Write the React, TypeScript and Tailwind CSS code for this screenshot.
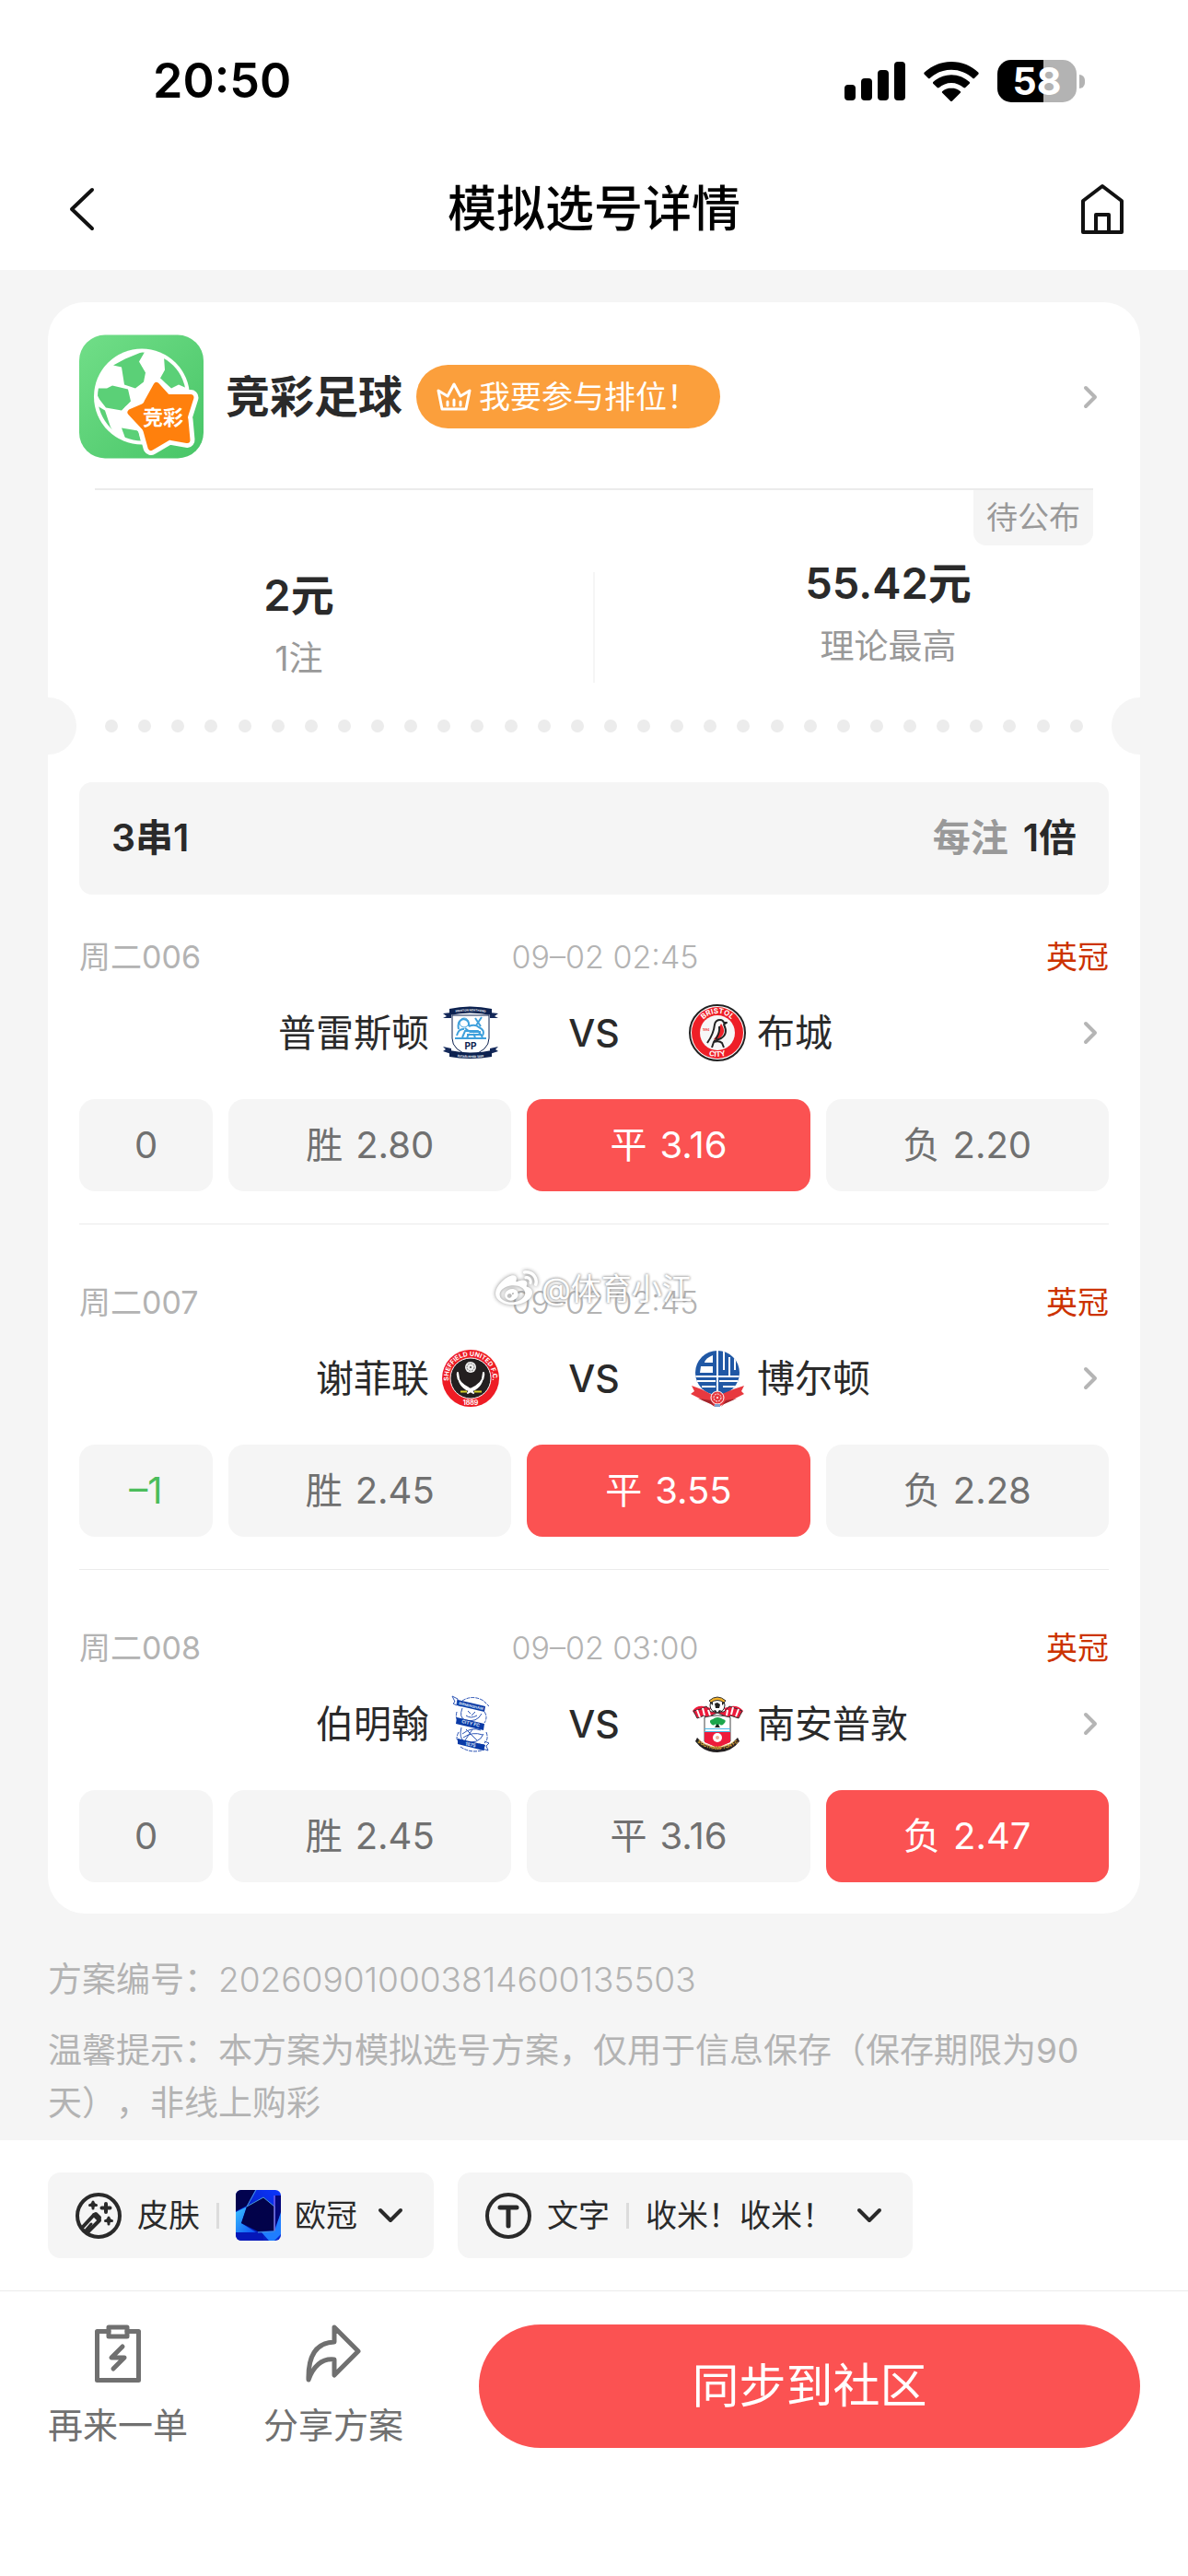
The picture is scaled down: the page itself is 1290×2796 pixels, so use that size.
import type { ReactNode } from 'react';
import { FaWeibo } from 'react-icons/fa';

const curved = { fontFamily: 'Inter, sans-serif', fontWeight: 700 };

function StatusIcons() {
  return (
    <div className="flex items-center">
      <svg width="66" height="42" viewBox="0 0 66 42" aria-hidden="true">
        <rect x="0" y="25" width="12" height="17" rx="4" />
        <rect x="18" y="18" width="12" height="24" rx="4" />
        <rect x="36" y="9" width="12" height="33" rx="4" />
        <rect x="54" y="0" width="12" height="42" rx="4" />
      </svg>
      <svg className="ml-5" width="60" height="43" viewBox="0 0 60 43" aria-hidden="true">
        <path d="M30 0C18.500 0 8.300 4.400 .8 11.600a1.500 1.500 0 0 0 0 2.100l4 4.100a1.500 1.500 0 0 0 2.100 0C12.900 12.100 21 8.700 30 8.700s17.100 3.400 23.100 9.100a1.500 1.500 0 0 0 2.100 0l4-4.100a1.500 1.500 0 0 0 0-2.100C51.700 4.400 41.500 0 30 0Z" />
        <path d="M30 14.200c-7.600 0-14.400 2.900-19.500 7.600a1.500 1.500 0 0 0 0 2.200l4.200 4.100a1.600 1.600 0 0 0 2.100 0c3.500-3.200 8.100-5.200 13.200-5.200s9.700 2 13.200 5.200a1.600 1.600 0 0 0 2.100 0l4.200-4.100a1.500 1.500 0 0 0 0-2.200c-5.100-4.700-11.900-7.600-19.500-7.600Z" />
        <path d="M30 28.400c-3.700 0-7 1.300-9.600 3.500a1.500 1.500 0 0 0 0 2.200l8.500 8.400a1.500 1.500 0 0 0 2.200 0l8.500-8.400a1.500 1.500 0 0 0 0-2.200c-2.600-2.200-5.900-3.500-9.600-3.500Z" />
      </svg>
      <div className="ml-5 flex h-[46px] w-[86px] items-center justify-center rounded-[15px] bg-[linear-gradient(90deg,#000_58%,#b3b3b3_58%)] text-[41px] leading-[46px] font-bold text-white">
        58
      </div>
      <div className="ml-[3px] h-[15px] w-[6px] rounded-r-full bg-[#b3b3b3]" />
    </div>
  );
}

function ChevronRight() {
  return (
    <svg className="shrink-0" width="16" height="26" viewBox="0 0 16 26" fill="none" stroke="#b5b5b5" strokeWidth="4" strokeLinecap="round" strokeLinejoin="round" aria-hidden="true">
      <path d="M3 3 13 13 3 23" />
    </svg>
  );
}

function ChevronDown() {
  return (
    <svg width="28" height="18" viewBox="0 0 28 18" fill="none" stroke="#2a2a2a" strokeWidth="4" strokeLinecap="round" strokeLinejoin="round" aria-hidden="true">
      <path d="M3 3 14 14 25 3" />
    </svg>
  );
}

function FootballLogo() {
  return (
    <svg className="shrink-0" width="135" height="135" viewBox="0 0 135 134" aria-hidden="true">
      <defs>
        <linearGradient id="turf" x1="0" y1="0" x2="1" y2="1">
          <stop offset="0" stopColor="#71de88" />
          <stop offset="1" stopColor="#48c567" />
        </linearGradient>
        <clipPath id="ballClip">
          <circle cx="68" cy="67" r="48" />
        </clipPath>
      </defs>
      <rect width="135" height="134" rx="28" fill="url(#turf)" />
      <circle cx="68" cy="67" r="52" fill="#fff" />
      <g clipPath="url(#ballClip)" fill="#5bd077">
        <path d="M50 26 72 17 65 29 72 41 70 51 61 58 49 54 46 35 37 33Z" />
        <path d="M92 24 108 30 122 60 108 54 100 58 88 47 93 38Z" />
        <path d="M36 55 53 59 56 72 46 82 29 79 22 70 16 58 30 58Z" />
        <path d="M16 75 28 82 34 100 40 110 22 100Z" />
        <path d="M46 101 64 104 68 120 50 112Z" />
        <path d="M18 40 30 34 24 46 18 56Z" />
      </g>
      <path d="M84 55 94 66Q95 68 98 68L121 68 115 87Q114 90 115 92L117 114 100 111Q97 110 95 112L78 122 73 104Q72 101 70 99L56 84 70 78Q73 76 74 73Z" fill="#fff" stroke="#fff" strokeWidth="17" strokeLinejoin="round" />
      <path d="M84 55 94 66Q95 68 98 68L121 68 115 87Q114 90 115 92L117 114 100 111Q97 110 95 112L78 122 73 104Q72 101 70 99L56 84 70 78Q73 76 74 73Z" fill="#ff800d" stroke="#ff800d" strokeWidth="7" strokeLinejoin="round" />
      <text x="91" y="97" textAnchor="middle" fontSize="22" fontWeight="700" fill="#fff">竞彩</text>
    </svg>
  );
}

function Crown() {
  return (
    <svg width="38" height="32" viewBox="0 0 38 32" fill="none" stroke="#fff" strokeWidth="3" strokeLinejoin="round" strokeLinecap="round" aria-hidden="true">
      <path d="M2 9 6 29H32L36 9 26 15 19 2 12 15Z" />
      <path d="M12 21v4M19 19v6M26 21v4" />
    </svg>
  );
}

function PrestonCrest() {
  return (
    <svg width="62" height="62" viewBox="0 0 62 62" aria-hidden="true">
      <path d="M11 12H51V37Q51 50 31 56Q11 50 11 37Z" fill="#fff" stroke="#0d2250" strokeWidth="1" />
      <g fill="none" stroke="#3fa0dc" strokeWidth="2">
        <path d="M14 37H48M16 34q2-8 8-7M22 36l3-7h14l5 7M18 27q-2-9 5-11q7 1 6 8M29 24q7-3 11 1q7 3 4 9M30 30h12M27 33h16M36 15l6 9M43 14l-6 9M25 26l5 4M27 36l3-4M36 36l-2-4" />
        <circle cx="24" cy="20" r="5" strokeWidth="1" />
      </g>
      <text x="31" y="49" textAnchor="middle" fontSize="10" fill="#0d2250" style={curved}>PP</text>
      <path d="M1 10 10 9V15L1 15 5 13ZM61 10 52 9V15L61 15 57 13ZM1 46 10 48V54L1 51 4 49ZM61 46 52 48V54L61 51 58 49Z" fill="#14295a" />
      <path d="M8 5Q31 0 54 5V12Q31 7 8 12Z" fill="#0d2250" />
      <path d="M8 50Q31 55 54 50V57Q31 61 8 57Z" fill="#0d2250" />
      <path id="pneTop" d="M9 10Q31 5 53 10" fill="none" />
      <path id="pneBottom" d="M10 56Q31 60 52 56" fill="none" />
      <text fontSize="3" fill="#fff" textAnchor="middle" style={curved}><textPath href="#pneTop" startOffset="50%">PRESTON NORTH END</textPath></text>
      <text fontSize="3" fill="#fff" textAnchor="middle" style={curved}><textPath href="#pneBottom" startOffset="50%">ESTABLISHED 1880</textPath></text>
    </svg>
  );
}

function BristolCrest() {
  return (
    <svg width="62" height="62" viewBox="0 0 62 62" aria-hidden="true">
      <circle cx="31" cy="31" r="30" fill="#fff" stroke="#222" strokeWidth="2" />
      <circle cx="31" cy="31" r="28" fill="#ee1f27" />
      <circle cx="31" cy="31" r="19" fill="#f7f7f7" />
      <path id="bcTop" d="M10 31A21 21 0 0 1 52 31" fill="none" />
      <path id="bcBottom" d="M5 31A26 26 0 0 0 57 31" fill="none" />
      <text fontSize="8" fill="#fff" textAnchor="middle" style={curved}><textPath href="#bcTop" startOffset="50%">BRISTOL</textPath></text>
      <text fontSize="8" fill="#fff" textAnchor="middle" style={curved}><textPath href="#bcBottom" startOffset="50%">CITY</textPath></text>
      <text x="15" y="29" fontSize="3" fill="#ee1f27" style={curved}>1894</text>
      <path d="M35 21Q42 31 33 37Q29 40 27 38Q33 32 33 25Z" fill="#ee1f27" />
      <path d="M20 42Q27 32 28 22Q29 17 34 17Q37 17 38 20L41 20 38 22Q43 32 35 37L27 40M25 47l2-6q6-2 9 1l2 5M33 24q1 7-4 14" fill="none" stroke="#222" strokeWidth="2" strokeLinejoin="round" />
    </svg>
  );
}

function SheffieldCrest() {
  return (
    <svg width="62" height="62" viewBox="0 0 62 62" aria-hidden="true">
      <circle cx="31" cy="31" r="31" fill="#ee1c25" />
      <circle cx="31" cy="31" r="22" fill="#231f20" stroke="#fff" strokeWidth="1" />
      <path id="suTop" d="M11 44A24 24 0 1 1 51 44" fill="none" />
      <text fontSize="7" fill="#fff" textAnchor="middle" style={curved}><textPath href="#suTop" startOffset="50%">SHEFFIELD UNITED F.C.</textPath></text>
      <text x="31" y="60" textAnchor="middle" fontSize="7" fill="#fff" style={curved}>1889</text>
      <circle cx="31" cy="19" r="6" fill="#eee" />
      <circle cx="31" cy="19" r="4" fill="none" stroke="#777" strokeWidth="1" strokeDasharray="2 1" />
      <circle cx="31" cy="19" r="1" fill="#444" />
      <path d="M17 25Q15 35 31 43L34 47 29 44Q18 40 17 25ZM45 25Q47 35 31 43L28 47 33 44Q44 40 45 25Z" fill="#fff" stroke="#fff" strokeWidth="2" strokeLinejoin="round" />
      <path d="M20 45.500h7M35 45.500h8" stroke="#d8d22a" strokeWidth="2" />
    </svg>
  );
}

function BoltonCrest() {
  return (
    <svg width="62" height="62" viewBox="0 0 62 62" aria-hidden="true">
      <defs>
        <clipPath id="boltonClip">
          <circle cx="31" cy="25" r="24" />
        </clipPath>
      </defs>
      <g clipPath="url(#boltonClip)">
        <rect width="62" height="62" fill="#2058a5" />
        <g stroke="#fff" strokeWidth="2" fill="none">
          <path d="M31 0V60M0 29H62" />
          <path d="M17 14Q18 9 26 6V14ZM13 18H26V25H12Z" fill="#fff" strokeWidth="0" />
          <path d="M38 0V22M50 0V22" />
          <path d="M44 8V30" />
          <path d="M0 34H29M14 40H29M33 34H62M37 40H56" />
        </g>
      </g>
      <path d="M3 39 14 43 29 51 48 43 60 39 57 45 60 48 34 61H28L2 48 6 45Z" fill="#e8393f" />
      <path d="M10 53 24 59 28 62 24 55ZM52 53 38 59 35 62 40 55Z" fill="#a3242b" />
      <circle cx="31" cy="52" r="7" fill="#e8393f" stroke="#fff" strokeWidth="1" />
      <circle cx="31" cy="52" r="4" fill="none" stroke="#fff" strokeWidth="1" strokeDasharray="2 1" />
      <circle cx="31" cy="52" r="1" fill="#fff" />
      <rect x="28" y="59" width="6" height="3" fill="#7fa0cc" />
    </svg>
  );
}

function BirminghamCrest() {
  return (
    <svg width="62" height="62" viewBox="0 0 62 62" aria-hidden="true">
      <g fill="none" stroke="#2d55b5" strokeWidth="1">
        <path d="M22 6Q33 -1 45 6L51 12M16 18Q14 26 18 28M46 18Q50 24 46 30M18 40Q14 48 18 50M48 40Q51 48 46 52M20 56Q32 64 46 59" strokeDasharray="4 1" />
        <path d="M22 14Q18 24 25 27Q38 30 43 20M28 17l3 3M36 18l-4 4M26 22q5 4 12 0M21 35Q18 46 24 50Q40 54 45 42M22 42q10-8 20-4M23 46q10-7 21-3M26 37l12 12M33 37l-8 12" />
        <path d="M11 1 17 4 16 10 21 12M11 1 14 7 12 9 16 11M50 60 44 58 46 54 40 53M50 60 48 55 51 52 46 50" />
      </g>
      <path d="M17 5 47 12 46 18 16 11ZM16 24 46 31 45 38 15 31ZM17 47 47 54 45 60 17 53Z" fill="#0a3aa6" />
      <text x="18" y="10" fontSize="4" fill="#dbe4f7" transform="rotate(13 18 10)" style={curved}>BIRMINGHAM</text>
      <text x="21" y="30" fontSize="5" fill="#dbe4f7" transform="rotate(13 21 30)" style={curved}>CITY FC</text>
      <text x="25" y="54" fontSize="5" fill="#dbe4f7" transform="rotate(13 25 54)" style={curved}>1875</text>
    </svg>
  );
}

function SouthamptonCrest() {
  return (
    <svg width="62" height="62" viewBox="0 0 62 62" aria-hidden="true">
      <path d="M23 16Q10 15 6 20L4 17Q8 11 16 12L24 14ZM39 16Q52 15 57 20L59 17Q54 11 46 12L38 14Z" fill="#ed1a3b" />
      <path d="M5 17 9 25 17 22 18 25 31 19 44 25 45 22 54 25 58 17 50 14 44 12 38 18H24L19 12 13 15Z" fill="#ed1a3b" stroke="#333" strokeWidth="1" />
      <path d="M9 16l3 8M15 14l2 8M21 16l2 6M41 22l1-6M46 21l2-8M51 23l3-8" stroke="#fff" strokeWidth="2" />
      <path d="M17 24Q31 20 45 24V50Q38 52 31 57Q24 52 17 50Z" fill="#fff" stroke="#444" strokeWidth="1" />
      <path d="M17 40H45V51L31 57 17 51Z" fill="#ed1a3b" />
      <path d="M17 36.500H45M17 39.500H45" stroke="#49b7e6" strokeWidth="1" />
      <path d="M24 31Q21 27 26 26Q31 22 37 26Q42 27 38 31Q35 34 33 31L32 35H30L29 31Q27 34 24 31Z" fill="#1ca64c" />
      <path d="M28 35 31 31 34 35Z" fill="#222" />
      <circle cx="31" cy="46" r="5" fill="#fff" />
      <circle cx="31" cy="46" r="2" fill="#e9b09a" />
      <circle cx="31" cy="11" r="8" fill="#fff" stroke="#222" strokeWidth="1" />
      <path d="M28 9 31 8 34 10 33 14 29 14ZM23 8 26 6 26 11ZM39 8 36 6 36 11ZM26 17 29 16 31 19ZM36 17 33 16 31 19Z" fill="#222" />
      <path d="M22 6Q31 -2 40 6L38 8Q31 3 24 8Z" fill="#f3b229" stroke="#333" strokeWidth="1" />
      <path d="M9 46 15 52Q31 61 47 52L53 46 55 50Q46 62 31 62Q16 62 7 50Z" fill="#231f20" />
      <path id="sfcRibbon" d="M9 51Q31 67 54 51" fill="none" />
      <text fontSize="5" fill="#e6b23a" textAnchor="middle" style={curved}><textPath href="#sfcRibbon" startOffset="50%">SOUTHAMPTON FC</textPath></text>
    </svg>
  );
}

function SkinIcon() {
  return (
    <svg width="50" height="50" viewBox="0 0 50 50" fill="none" stroke="#2a2a2a" strokeWidth="4" strokeLinecap="round" strokeLinejoin="round" aria-hidden="true">
      <circle cx="25" cy="25" r="23" />
      <path d="M8 37 20 24 26 30 13 43" />
      <path d="M17 34l-6 7" strokeWidth="3" />
      <path d="M20 24l2-1 4 4-1 3" />
      <path d="M19 9l4 4-4 4-4-4ZM36 26l4 4-4 4-4-4Z" fill="#2a2a2a" stroke="none" />
      <path d="M19 10v7M15.500 13.500h7M36 27v7M32.500 30.500h7" strokeWidth="3" />
      <path d="M33 12v9M28.500 16.500h9" strokeWidth="4" />
    </svg>
  );
}

function TextIcon() {
  return (
    <svg width="50" height="50" viewBox="0 0 50 50" fill="none" stroke="#2a2a2a" strokeWidth="4" strokeLinecap="round" aria-hidden="true">
      <circle cx="25" cy="25" r="23" />
      <path d="M16 16H34M25 16V36" strokeWidth="5" />
    </svg>
  );
}

function SkinThumb() {
  return (
    <svg width="49" height="55" viewBox="0 0 49 55" aria-hidden="true">
      <defs>
        <linearGradient id="skinBg" x1="0" y1="1" x2="1" y2="0">
          <stop offset="0" stopColor="#0414a0" />
          <stop offset="1" stopColor="#0b36ff" />
        </linearGradient>
        <linearGradient id="skinGlow" x1="0" y1="0" x2="1" y2="1">
          <stop offset="0" stopColor="#3cc4ff" />
          <stop offset="1" stopColor="#0a50f5" />
        </linearGradient>
        <clipPath id="skinClip">
          <rect width="49" height="55" rx="6" />
        </clipPath>
      </defs>
      <g clipPath="url(#skinClip)">
        <rect width="49" height="55" fill="url(#skinBg)" />
        <path d="M0 0H21L12 17 0 23Z" fill="#02034f" />
        <path d="M0 24 12 18 6 36 22 46H0Z" fill="url(#skinGlow)" />
        <path d="M0 46 30 46 30 55H0Z" fill="#0517b8" />
        <path d="M43 6H49V26L43 40Z" fill="#04067a" />
        <path d="M28 46 42 45 49 24V48L42 55H36Z" fill="#1f7dff" />
        <path d="M12 18 30 8 42 18V44L24 45 6 36Z" fill="#02024a" />
        <path d="M22 0 12 18 30 8 42 18V45L24 46" fill="none" stroke="#4a9bd8" strokeWidth="1" />
        <path d="M42 6V44" stroke="#9d6be0" strokeWidth="1" />
      </g>
    </svg>
  );
}

type Match = {
  id: string;
  time: string;
  home: string;
  homeCrest: ReactNode;
  away: string;
  awayCrest: ReactNode;
  handicap: string;
  odds: [string, string, string];
  picked: number;
};

const matches: Match[] = [
  { id: '周二006', time: '09–02 02:45', home: '普雷斯顿', homeCrest: <PrestonCrest />, away: '布城', awayCrest: <BristolCrest />, handicap: '0', odds: ['2.80', '3.16', '2.20'], picked: 1 },
  { id: '周二007', time: '09–02 02:45', home: '谢菲联', homeCrest: <SheffieldCrest />, away: '博尔顿', awayCrest: <BoltonCrest />, handicap: '–1', odds: ['2.45', '3.55', '2.28'], picked: 1 },
  { id: '周二008', time: '09–02 03:00', home: '伯明翰', homeCrest: <BirminghamCrest />, away: '南安普敦', awayCrest: <SouthamptonCrest />, handicap: '0', odds: ['2.45', '3.16', '2.47'], picked: 2 },
];

const outcomes = ['胜', '平', '负'];

function MatchRow({ match, watermark }: { match: Match; watermark?: ReactNode }) {
  return (
    <li className="relative border-b border-[#ebebeb] pt-[60px] pb-[35px] first:pt-[43px] last:border-b-0 last:pb-0">
      <div className="grid grid-cols-3 text-[34px] leading-[50px] text-[#b3b3b3]">
        <span>{match.id}</span>
        <span className="pl-6 text-center font-light whitespace-nowrap">{match.time}</span>
        <span className="text-right text-[#cc3300]">英冠</span>
      </div>
      {watermark}
      <div className="mt-[26px] grid grid-cols-[1fr_206px_1fr] items-center text-[41px] leading-[62px] text-[#2a2a2a]">
        <div className="flex items-center justify-end gap-[14px]">
          <span>{match.home}</span>
          {match.homeCrest}
        </div>
        <span className="text-center font-medium">VS</span>
        <div className="flex items-center gap-3">
          {match.awayCrest}
          <span>{match.away}</span>
          <a href="#match" aria-label={match.home + ' VS ' + match.away} className="mr-3 ml-auto">
            <ChevronRight />
          </a>
        </div>
      </div>
      <div className="mt-[41px] flex gap-[17px] text-[40px] text-[#707070]">
        <div className={match.handicap === '0' ? 'flex h-[100px] w-[145px] items-center justify-center rounded-[17px] bg-[#f5f5f5]' : 'flex h-[100px] w-[145px] items-center justify-center rounded-[17px] bg-[#f5f5f5] text-[#4bbd5b]'}>
          {match.handicap}
        </div>
        {outcomes.map((name, i) => (
          <button
            key={name}
            type="button"
            aria-pressed={i === match.picked}
            className={i === match.picked ? 'flex h-[100px] flex-1 items-center justify-center gap-[14px] rounded-[17px] bg-[#fb5252] text-white' : 'flex h-[100px] flex-1 items-center justify-center gap-[14px] rounded-[17px] bg-[#f5f5f5]'}
          >
            <span>{name}</span>
            <span>{match.odds[i]}</span>
          </button>
        ))}
      </div>
    </li>
  );
}

function Watermark() {
  return (
    <div className="absolute top-[46px] left-[452px] flex items-center gap-1 text-[33px] leading-[48px] text-white [text-shadow:0_0_3px_#888,0_0_3px_#aaa]">
      <FaWeibo className="h-[46px] w-[46px] drop-shadow-[0_0_2px_#888]" aria-hidden="true" />
      <span>@体育小江</span>
    </div>
  );
}

export default function App() {
  return (
    <div lang="zh-CN" className="flex min-h-screen flex-col bg-[#f5f5f5] font-['Inter','Noto_Sans_CJK_SC',sans-serif] [text-spacing-trim:space-all]">
      <header className="bg-white">
        <div className="flex items-center justify-between pt-[60px] pr-[112px] pl-[166px]">
          <span className="text-[52px] leading-[56px] font-semibold">20:50</span>
          <StatusIcons />
        </div>
        <div className="grid grid-cols-[1fr_auto_1fr] items-center px-[70px] pt-[76px] pb-[31px]">
          <button type="button" aria-label="返回" className="justify-self-start px-1">
            <svg width="30" height="48" viewBox="0 0 30 48" fill="none" stroke="#111" strokeWidth="4" strokeLinecap="round" strokeLinejoin="round">
              <path d="M26 3 4 24 26 45" />
            </svg>
          </button>
          <h1 className="text-[53px] leading-[70px] font-medium">模拟选号详情</h1>
          <a href="#home" aria-label="首页" className="justify-self-end">
            <svg width="46" height="56" viewBox="0 0 46 56" fill="none" stroke="#111" strokeWidth="4" strokeLinejoin="round">
              <path d="M2 19 23 3 44 19V53H2Z" />
              <path d="M16 53V34H30V53" />
            </svg>
          </a>
        </div>
      </header>

      <main className="px-[52px] pt-[35px]">
        <section className="overflow-hidden rounded-[40px] bg-white pt-[35px] pb-[34px]">
          <div className="flex items-center px-[34px]">
            <FootballLogo />
            <h2 className="ml-6 text-[48px] leading-[60px] font-bold text-[#2a2a2a]">竞彩足球</h2>
            <button type="button" className="ml-[15px] flex h-[69px] items-center gap-2 rounded-full bg-[#fb9f3c] pr-6 pl-[22px] text-[34px] text-white">
              <Crown />
              <span>我要参与排位！</span>
            </button>
            <a href="#lottery" aria-label="竞彩足球" className="mr-3 ml-auto">
              <ChevronRight />
            </a>
          </div>

          <div className="relative mx-[51px] mt-8 grid h-[227px] grid-cols-[1fr_2px_1fr] border-t-2 border-[#ebebeb] text-center">
            <div className="pt-[86px] pr-[98px]">
              <p className="text-[47px] leading-[56px] font-semibold text-[#2a2a2a]">2元</p>
              <p className="mt-[19px] text-[37px] leading-[44px] text-[#999]">1注</p>
            </div>
            <div className="mt-[89px] h-[120px] bg-[#f5f5f5]" />
            <div className="pt-[73px] pl-24">
              <p className="text-[47px] leading-[56px] font-semibold text-[#2a2a2a]">55.42元</p>
              <p className="mt-[19px] text-[37px] leading-[44px] text-[#999]">理论最高</p>
            </div>
            <span className="absolute top-0 right-0 rounded-b-[14px] bg-[#f5f5f5] px-[14px] text-[34px] leading-[60px] text-[#999]">待公布</span>
          </div>

          <div className="flex items-center justify-between" aria-hidden="true">
            <div className="h-[62px] w-[31px] rounded-r-full bg-[#f5f5f5]" />
            <div className="mx-[31px] flex flex-1 justify-between">
              {Array.from({ length: 30 }, (_, i) => (
                <span key={i} className="size-[14px] rounded-full bg-[#ececec]" />
              ))}
            </div>
            <div className="h-[62px] w-[31px] rounded-l-full bg-[#f5f5f5]" />
          </div>

          <div className="mx-[34px] mt-[30px] flex h-[122px] items-center justify-between rounded-[14px] bg-[#f5f5f5] px-[35px] text-[41px] font-semibold text-[#2a2a2a]">
            <span>3串1</span>
            <span className="flex gap-4">
              <span className="text-[#999]">每注</span>
              <span>1倍</span>
            </span>
          </div>

          <ul className="px-[34px]">
            {matches.map((match, i) => (
              <MatchRow key={match.id} match={match} watermark={i === 1 ? <Watermark /> : null} />
            ))}
          </ul>
        </section>

        <div className="pt-[43px] pb-3 text-[37px] leading-[57px] text-[#b3b3b3]">
          <p>
            方案编号：<span className="font-light">202609010003814600135503</span>
          </p>
          <p className="mt-5">温馨提示：本方案为模拟选号方案，仅用于信息保存（保存期限为90天），非线上购彩</p>
        </div>
      </main>

      <footer className="flex-1 bg-white">
        <div className="flex gap-[26px] border-b border-[#ebebeb] px-[52px] py-[35px] text-[34px] text-[#2a2a2a]">
          <button type="button" className="flex h-[93px] items-center rounded-[14px] bg-[#f5f5f5] pr-[33px] pl-[30px]">
            <SkinIcon />
            <span className="ml-[17px]">皮肤</span>
            <span className="mx-[18px] h-7 w-[3px] bg-[#dcdcdc]" />
            <SkinThumb />
            <span className="mr-[22px] ml-[15px]">欧冠</span>
            <ChevronDown />
          </button>
          <button type="button" className="flex h-[93px] items-center rounded-[14px] bg-[#f5f5f5] pr-[33px] pl-[30px]">
            <TextIcon />
            <span className="ml-[17px]">文字</span>
            <span className="mx-[18px] h-7 w-[3px] bg-[#dcdcdc]" />
            <span className="mr-[25px]">收米！收米！</span>
            <ChevronDown />
          </button>
        </div>
        <div className="flex items-start px-[52px] pt-9 text-[38px] leading-[50px] text-[#707070]">
          <button type="button" className="flex flex-col items-center whitespace-nowrap">
            <svg width="50" height="64" viewBox="0 0 50 64" fill="none" stroke="#707070" strokeWidth="5" strokeLinejoin="round" strokeLinecap="round" aria-hidden="true">
              <path d="M15 7.500H2.500V60.500H47.500V7.500H35" />
              <rect x="15" y="3" width="20" height="10" />
              <path d="M30 24 18 36H32L20 48" />
            </svg>
            <span className="mt-[20px]">再来一单</span>
          </button>
          <button type="button" className="ml-[82px] flex flex-col items-center whitespace-nowrap">
            <svg width="60" height="64" viewBox="0 0 60 64" fill="none" stroke="#707070" strokeWidth="5" strokeLinejoin="round" aria-hidden="true">
              <path d="M31 3 57 29 31 55V38Q12 36 3 60Q2 20 31 19Z" />
            </svg>
            <span className="mt-[20px]">分享方案</span>
          </button>
          <button type="button" className="ml-[82px] h-[134px] flex-1 rounded-full bg-[#fb5252] text-[51px] text-white">
            同步到社区
          </button>
        </div>
      </footer>
    </div>
  );
}
